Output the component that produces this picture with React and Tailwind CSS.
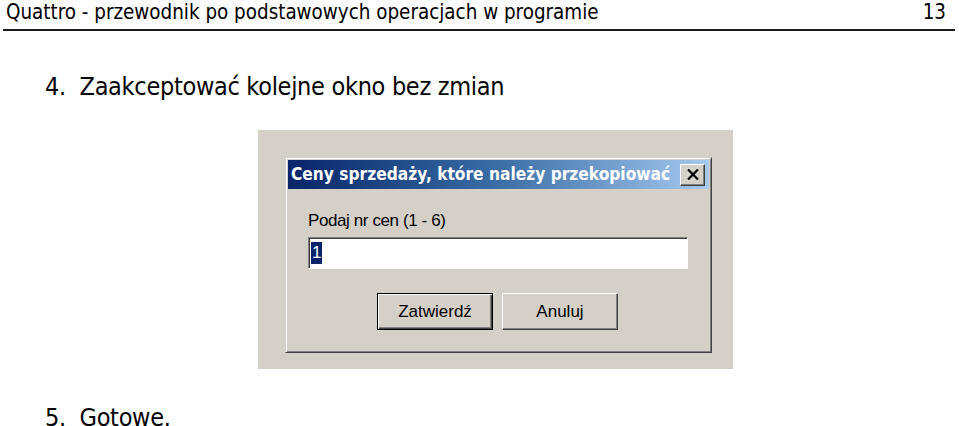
import React from 'react'

function TitleBar() {
  return (
    <div className="flex h-[29px] items-center justify-between bg-gradient-to-r from-[#0a246a] via-[#3a6ea5] to-[#a6caf0] pl-[3px] pr-[4px]">
      <span className="whitespace-nowrap text-[17.2px] font-bold leading-none text-white [font-family:'DejaVu_Sans_Condensed','DejaVu_Sans',sans-serif]">
        Ceny sprzedaży, które należy przekopiować
      </span>
      <button className="flex h-[22px] w-[25px] items-center justify-center border border-t-white border-l-white border-r-[#404040] border-b-[#404040] bg-[#d4d0c8] shadow-[inset_-1px_-1px_0_#808080]">
        <svg width="12" height="11" viewBox="0 0 12 11">
          <path d="M1 0.5 L11 10.5 M11 0.5 L1 10.5" stroke="#000" strokeWidth="2.2" />
        </svg>
      </button>
    </div>
  )
}

function WinButton({ children, focused }) {
  return (
    <button
      className={
        focused
          ? 'flex h-[37px] w-[116px] items-center justify-center border border-black bg-[#d4d0c8] shadow-[inset_1px_1px_0_#fff,inset_-1px_-1px_0_#404040,inset_-2px_-2px_0_#808080] text-[17px] text-black [font-family:\'Liberation_Sans\',sans-serif]'
          : 'flex h-[37px] w-[116px] items-center justify-center border border-t-white border-l-white border-r-[#404040] border-b-[#404040] bg-[#d4d0c8] shadow-[inset_-1px_-1px_0_#808080] text-[17px] text-black [font-family:\'Liberation_Sans\',sans-serif]'
      }
    >
      {children}
    </button>
  )
}

function Dialog() {
  return (
    <div className="ml-[27px] mt-[26px] w-[427px] border border-t-[#d4d0c8] border-l-[#d4d0c8] border-r-[#404040] border-b-[#404040] bg-[#d4d0c8] p-[2px] shadow-[inset_1px_1px_0_#fff,inset_-1px_-1px_0_#808080]">
      <TitleBar />
      <div className="pl-[20px] pr-[21px] pt-[23px] pb-[20px]">
        <div className="text-[17px] leading-[18px] tracking-[-0.4px] text-black [font-family:'Liberation_Sans',sans-serif]">
          Podaj nr cen (1 - 6)
        </div>
        <div className="mt-[7px] flex h-[32px] items-center border border-t-[#808080] border-l-[#808080] border-r-white border-b-white bg-white pl-[2px] shadow-[inset_1px_1px_0_#404040]">
          <span className="bg-[#0a246a] px-[1px] text-[17px] leading-[22px] text-white [font-family:'Liberation_Sans',sans-serif]">
            1
          </span>
        </div>
        <div className="mt-[24px] flex gap-[9px] pl-[69px]">
          <WinButton focused>Zatwierdź</WinButton>
          <WinButton>Anuluj</WinButton>
        </div>
      </div>
    </div>
  )
}

export default function App() {
  return (
    <div className="h-[426px] w-[959px] overflow-hidden bg-white text-black [font-family:'DejaVu_Sans_Condensed','DejaVu_Sans',sans-serif]">
      <div className="ml-[3px] mr-[4px] flex h-[31px] items-start justify-between border-b-2 border-[#1a1a1a] pl-[3px] pr-[9px]">
        <span className="text-[20.4px] leading-[24px] whitespace-nowrap">
          Quattro - przewodnik po podstawowych operacjach w programie
        </span>
        <span className="text-[20.4px] leading-[24px]">13</span>
      </div>

      <div className="ml-[45px] mt-[41px] text-[25px] leading-[30px] tracking-[-0.3px] whitespace-nowrap">
        4.&nbsp;&nbsp;Zaakceptować kolejne okno bez zmian
      </div>

      <div className="ml-[258px] mt-[28px] h-[239px] w-[475px] bg-[#d4d0c8] pt-px">
        <Dialog />
      </div>

      <div className="ml-[45px] mt-[34px] text-[25px] leading-[30px] tracking-[-0.3px] whitespace-nowrap">
        5.&nbsp;&nbsp;Gotowe.
      </div>
    </div>
  )
}
